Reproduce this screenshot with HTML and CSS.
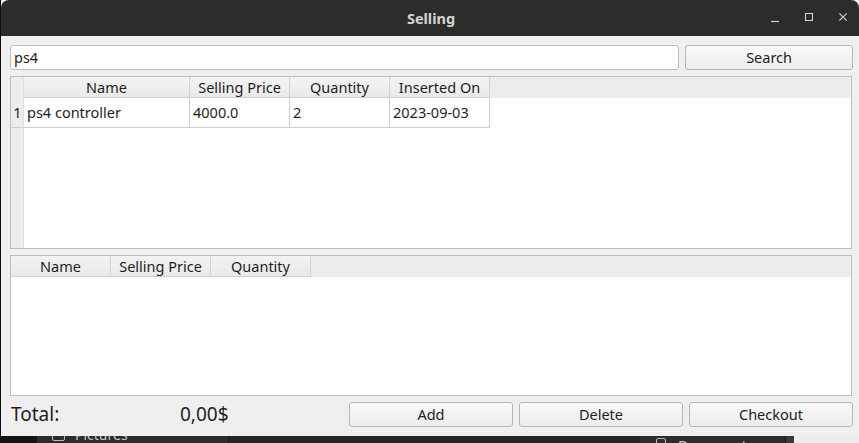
FILE: index.html
```html
<!DOCTYPE html>
<html>
<head>
<meta charset="utf-8">
<link rel="stylesheet" href="styles.css">
</head>
<body>
<div class="screen">
  <div class="window">
    <div class="titlebar">
      <span class="title">Selling</span>
      <div class="controls">
        <svg class="ctl" width="12" height="12" viewBox="0 0 12 12"><path d="M2 10.5h8" stroke="#cfcfcf" stroke-width="1.2"/></svg>
        <svg class="ctl" width="12" height="12" viewBox="0 0 12 12"><rect x="2.5" y="2.5" width="7" height="7" fill="none" stroke="#cfcfcf" stroke-width="1.1"/></svg>
        <svg class="ctl" width="12" height="12" viewBox="0 0 12 12"><path d="M2.3 2.3l7.4 7.4M9.7 2.3l-7.4 7.4" stroke="#cfcfcf" stroke-width="1.2"/></svg>
      </div>
    </div>
    <div class="body">
      <div class="search-row">
        <div class="input">ps4</div>
        <button class="btn search-btn">Search</button>
      </div>
      <div class="table t1">
        <div class="hrow">
          <div class="corner"></div>
          <div class="hcell w166">Name</div>
          <div class="hcell w100">Selling Price</div>
          <div class="hcell w100">Quantity</div>
          <div class="hcell w100">Inserted On</div>
          <div class="hfill"></div>
        </div>
        <div class="tbody">
          <div class="vheader">
            <div class="vcell">1</div>
          </div>
          <div class="rows">
            <div class="drow">
              <div class="dcell w166">ps4 controller</div>
              <div class="dcell w100">4000.0</div>
              <div class="dcell w100">2</div>
              <div class="dcell w100">2023-09-03</div>
            </div>
          </div>
        </div>
      </div>
      <div class="table t2">
        <div class="hrow">
          <div class="hcell w100">Name</div>
          <div class="hcell w100">Selling Price</div>
          <div class="hcell w100">Quantity</div>
          <div class="hfill"></div>
        </div>
        <div class="tbody"></div>
      </div>
      <div class="bottom-row">
        <div class="total-label">Total:</div>
        <div class="total-value">0,00$</div>
        <button class="btn act">Add</button>
        <button class="btn act">Delete</button>
        <button class="btn act">Checkout</button>
      </div>
    </div>
  </div>
  <div class="desktop">
    <div class="seg s1"></div>
    <div class="seg s2"><span class="folder"></span><span class="dtext">Pictures</span></div>
    <div class="seg s3"></div>
    <div class="seg s4"><span class="doc"></span><span class="dtext">Documents</span></div>
    <div class="seg s5"></div>
    <div class="seg s6"></div>
  </div>
</div>
</body>
</html>
```

FILE: styles.css
```css
* { box-sizing: border-box; }
html, body {
  margin: 0;
  padding: 0;
  width: 859px;
  height: 443px;
  overflow: hidden;
  background: #1b1b1b;
  font-family: "Noto Sans", "Open Sans", sans-serif;
  color: #1e1e1e;
}
.screen {
  display: flex;
  flex-direction: column;
  width: 859px;
  height: 443px;
}
.window {
  display: flex;
  flex-direction: column;
  width: 859px;
  height: 436px;
  border-left: 1px solid #0e0e0e;
  background: #efefef;
}
.titlebar {
  height: 36px;
  background: #2c2c2c;
  border-top-left-radius: 8px;
  border-top-right-radius: 8px;
  display: flex;
  align-items: center;
  justify-content: center;
  position: relative;
  flex: none;
}
.title {
  font-weight: bold;
  font-size: 14.5px;
  color: #d4d4d4;
  margin-left: 2px;
  margin-top: -1px;
}
.controls {
  position: absolute;
  right: 10px;
  top: 11px;
  display: flex;
  gap: 22px;
}
.ctl { display: block; }
.body {
  flex: 1;
  display: flex;
  flex-direction: column;
  padding: 9px 6px 9px 9px;
  gap: 6px;
}
.search-row {
  display: flex;
  gap: 6px;
  height: 25px;
  flex: none;
}
.input {
  width: 670px;
  height: 25px;
  background: #fff;
  border: 1px solid #bcbcbc;
  border-radius: 3px;
  font-size: 14.5px;
  line-height: 23px;
  padding-left: 3px;
}
.btn {
  font-family: "Noto Sans", "Open Sans", sans-serif;
  font-size: 14.5px;
  line-height: 22px;
  color: #1e1e1e;
  background: linear-gradient(#f9f9f9, #ececec);
  border: 1px solid #b6b6b6;
  border-radius: 3px;
  padding: 0 0 1px 0;
  height: 25px;
}
.search-btn { width: 168px; }
.table {
  width: 842px;
  border: 1px solid #bdbdbd;
  background: #fff;
  display: flex;
  flex-direction: column;
  flex: none;
}
.t1 { height: 173px; }
.t2 { height: 141px; }
.hrow {
  height: 21px;
  display: flex;
  background: #ececec;
  flex: none;
}
.corner {
  width: 13px;
  background: #ececec;
  border-right: 1px solid #dedede;
}
.hcell {
  height: 21px;
  font-size: 14.5px;
  line-height: 20px;
  text-align: center;
  background: linear-gradient(#f3f3f3, #e9e9e9);
  border-right: 1px solid #d2d2d2;
  border-bottom: 1px solid #cfcfcf;
  white-space: nowrap;
}
.w166 { width: 166px; }
.w100 { width: 100px; }
.hfill { flex: 1; background: #ececec; }
.tbody {
  flex: 1;
  display: flex;
  background: #fff;
}
.vheader {
  width: 13px;
  background: #ececec;
  border-right: 1px solid #dedede;
}
.vcell {
  height: 30px;
  font-size: 14.5px;
  line-height: 29px;
  text-align: center;
  border-bottom: 1px solid #cfcfcf;
  padding-left: 1px;
}
.rows { flex: 1; }
.drow { display: flex; height: 30px; }
.dcell {
  height: 30px;
  font-size: 14.5px;
  line-height: 29px;
  padding-left: 3px;
  border-right: 1px solid #cdcdcd;
  border-bottom: 1px solid #cdcdcd;
  white-space: nowrap;
}
.bottom-row {
  display: flex;
  align-items: center;
  height: 25px;
  gap: 6px;
  flex: none;
}
.total-label {
  width: 164px;
  font-size: 19px;
  padding-left: 1px;
  margin-top: -1px;
}
.total-value {
  flex: 1;
  font-size: 19px;
  margin-top: -1px;
}
.act { width: 164px; }
.desktop {
  height: 7px;
  display: flex;
  flex: none;
  overflow: hidden;
}
.seg { height: 7px; position: relative; overflow: hidden; }
.s1 { width: 37px; background: #141414; }
.s2 { width: 191px; background: #2c2c2c; }
.s3 { width: 412px; background: #262626; border-left: 1px solid #1a1a1a; }
.s4 { width: 145px; background: #2d2d2d; }
.s5 { width: 9px; background: #3a3a3a; border-left: 1px solid #1a1a1a; }
.s6 { flex: 1; background: #ececec; }
.folder {
  position: absolute;
  left: 15px;
  top: -6px;
  width: 13px;
  height: 11px;
  border: 1.5px solid #bbb;
  border-radius: 2px;
}
.doc {
  position: absolute;
  left: 16px;
  top: 2px;
  width: 10px;
  height: 12px;
  border: 1.5px solid #bbb;
  border-radius: 2px;
}
.dtext {
  position: absolute;
  left: 38px;
  top: -10px;
  font-size: 14px;
  line-height: 18px;
  color: #c8c8c8;
}
.s4 .dtext { top: 1px; }
```
